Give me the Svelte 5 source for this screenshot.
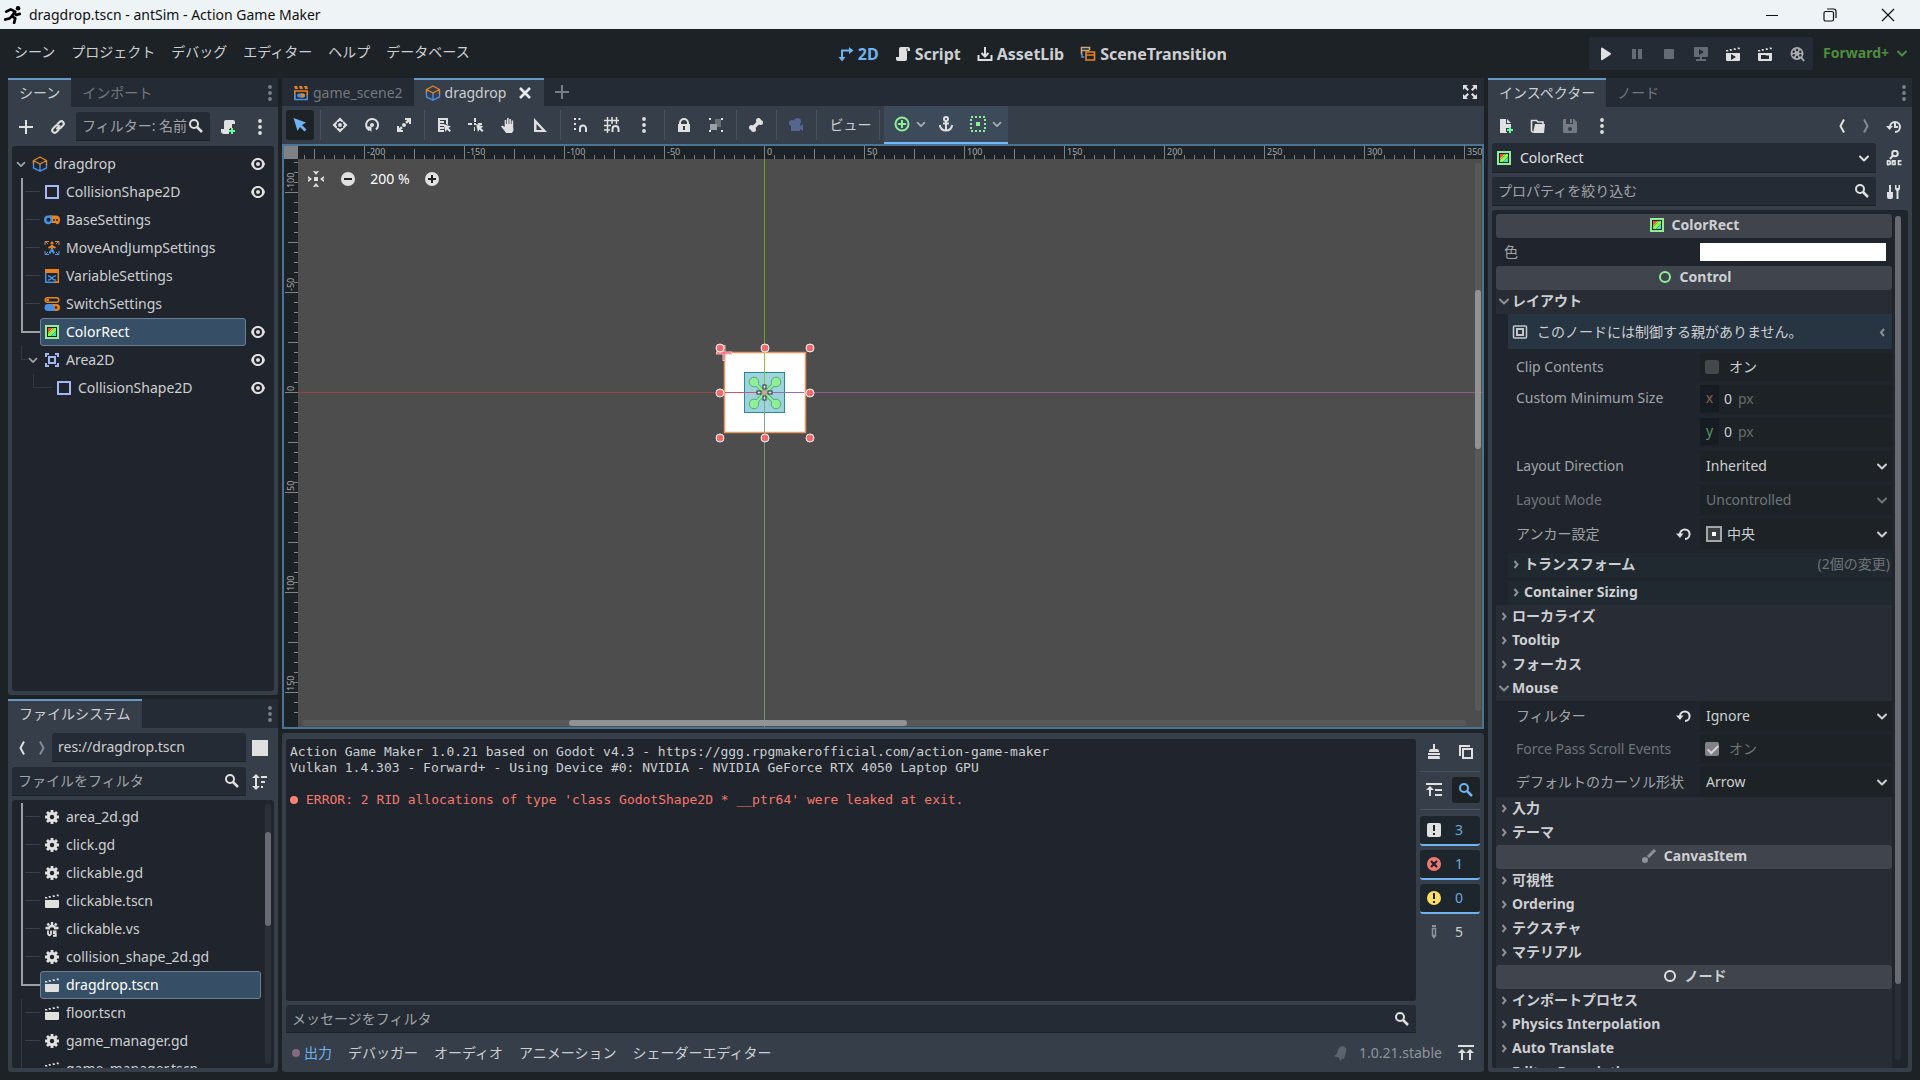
<script>
  const w = "#e0e0e0";

  const icons = {
    runner:
      '<g fill="none" stroke="#000" stroke-width="2.4" stroke-linecap="round" stroke-linejoin="round"><path d="M2 5l4-2 4 2-3 4 3 2-1 4M1 12l4-1 2-2M9 6l2 2 3-1"/></g><circle cx="12.500" cy="2" r="2"/>',
    add: `<path fill="currentColor" d="M7 1v6H1v2h6v6h2V9h6V7H9V1z"/>`,
    link: `<g fill="none" stroke="${w}" stroke-width="2" stroke-linecap="round"><path d="M7 9.500L9.500 7"/><path d="M7.500 5l2.300-2.300a2.500 2.500 0 0 1 3.500 3.500L10.500 9a2.500 2.500 0 0 1-2.500.600"/><path d="M8.500 11l-2.300 2.300a2.500 2.500 0 0 1-3.500-3.500L5.500 7A2.500 2.500 0 0 1 8 6.400"/></g>`,
    search:
      '<g fill="none" stroke="currentColor" stroke-width="2"><circle cx="6" cy="6" r="4"/><path d="M9 9l5 5" stroke-width="2.500"/></g>',
    scriptAdd: `<path fill="${w}" d="M6 1a2 2 0 0 0-2 2v7H1v2a3 3 0 0 0 3 3h5v-5h1V9h2V5h3V3a2 2 0 0 0-2-2z"/><path fill="#5fff97" d="M11 9h2v2h2v2h-2v2h-2v-2H9v-2h2z"/>`,
    dots: '<g fill="currentColor"><circle cx="8" cy="2" r="1.900"/><circle cx="8" cy="8" r="1.900"/><circle cx="8" cy="14" r="1.900"/></g>',
    eye: `<path fill="${w}" fill-rule="evenodd" d="M8 2C4.500 2 2 4.500 1 8c1 3.500 3.500 6 7 6s6-2.500 7-6c-1-3.500-3.500-6-7-6zm0 2a4 4 0 0 1 0 8 4 4 0 0 1 0-8zm0 2a2 2 0 0 0 0 4 2 2 0 0 0 0-4z"/>`,
    chevDown:
      '<path fill="none" stroke="currentColor" stroke-width="2" stroke-linecap="round" stroke-linejoin="round" d="M4 6.500l4 4 4-4"/>',
    chevRight:
      '<path fill="none" stroke="currentColor" stroke-width="2" d="M6.500 5l3 3.500-3 3.500"/>',
    chevLeft:
      '<path fill="none" stroke="currentColor" stroke-width="2" d="M10 5L7 8.500 10 12"/>',
    back: '<path fill="none" stroke="currentColor" stroke-width="2" d="M10 1.500L6.500 8l3.500 6.500"/>',
    forward:
      '<path fill="none" stroke="currentColor" stroke-width="2" d="M6 1.500L9.500 8 6 14.500"/>',
    cube: '<g fill="none" stroke-width="1.400" stroke-linejoin="round"><path stroke="#4a8ee0" d="M1.500 4.500v7.500L8 15.200 14.500 12V8M8 8v7"/><path stroke="#e0862c" d="M1.500 4.500L8 1l6.500 3.500L8 8zM14.500 4.500V9M1.500 4.500v3"/></g>',
    shape:
      '<rect x="2" y="2" width="12" height="12" fill="none" stroke="#a5b7f3" stroke-width="2"/>',
    base: '<path fill="#e8821e" d="M5 3.500h7A4 4 0 0 1 16 8c0 4-3 5.500-4.500 3H8z"/><path fill="#4a90e2" d="M4 3.500h4V11H7c-1.500 2.500-7 1.500-7-3a4 4 0 0 1 4-4.500z"/><circle cx="4.500" cy="7.700" r="2" fill="#1d2229"/><circle cx="10" cy="8" r="1" fill="#1d2229"/><circle cx="13" cy="8" r="1" fill="#1d2229"/>',
    move: '<path fill="none" stroke="#c98a55" d="M1 5V1.500h4M11 1.500h4V5M1.500 1.500L4 4M14.500 1.500L12 4"/><path fill="none" stroke="#5a93cf" d="M1 11v3.500h4M11 14.500h4V11M1.500 14.500L4 12M14.500 14.500L12 12"/><circle cx="8" cy="3" r="1.600" fill="#e8821e"/><path fill="none" stroke="#e8821e" stroke-width="2" d="M8 5v4M4.500 8L8 6l3.500 2"/><path fill="none" stroke="#4a90e2" stroke-width="2" d="M8 9l-2.500 4.500M8 9l2 4.500"/>',
    variable:
      '<path fill="#e8821e" d="M1 1h14v4H1z"/><path fill="none" stroke="#4a90e2" stroke-width="1.500" d="M1.700 5v9.300h12.600"/><path fill="none" stroke="#e8821e" stroke-width="1.500" d="M14.300 4v10.300H10"/><path fill="none" stroke="#4a90e2" stroke-width="1.500" d="M4 8c3-1 4 5 8 4M4 12c3 1 4-5 8-4"/>',
    toggles:
      '<rect x="1.200" y="1.700" width="13.600" height="4.600" rx="2.300" fill="none" stroke="#e8821e" stroke-width="1.400"/><circle cx="3.700" cy="4" r="1.500" fill="#e8821e"/><path fill="#e8821e" d="M8 8h4.500a3.500 3.500 0 0 1 0 7H8z"/><path fill="#4a90e2" d="M4 8h5l2 7H4a3.500 3.500 0 0 1 0-7z"/><circle cx="12" cy="11.500" r="1.300" fill="#1d2229"/>',
    colorRect:
      '<rect x="2" y="2" width="12" height="12" fill="#1d2229" stroke="#8eef97" stroke-width="2"/><path fill="#ff4545" d="M4 4h4L4 8z"/><path fill="#ffa53a" d="M8 4h2l-6 6V8z"/><path fill="#80ff45" d="M10 4h2v3l-5 5H4v-2z"/><path fill="#45e0c0" d="M12 7v5H7z"/>',
    area: '<path fill="none" stroke="#a5b7f3" stroke-width="2" d="M2 5V2h3M11 2h3v3M14 11v3h-3M5 14H2v-3"/><rect x="5" y="5" width="6" height="6" fill="none" stroke="#a5b7f3" stroke-width="2"/>',
    gear: `<g fill="none" stroke="${w}"><circle cx="8" cy="8" r="3.700" stroke-width="3"/><path stroke-width="2.800" d="M8 1v3M8 12v3M1 8h3M12 8h3M3 3l2.200 2.200M10.800 10.800L13 13M13 3l-2.200 2.200M5.200 10.800L3 13"/></g>`,
    vs: `<path fill="none" stroke="${w}" stroke-width="2.400" d="M8 1v3M1.500 7H5M11 7h3.500M3.500 2.500l1.500 2M12.500 2.500l-1.500 2M4.500 8.500a3.500 3.500 0 0 1 7 0"/><path fill="none" stroke="${w}" stroke-width="1.800" d="M4 9.500v3.500q1.500 2.500 3 0V9.500M12.500 10.300h-2.700v2h2v2.500H9"/>`,
    clapper: `<path fill="${w}" d="M1 7h14v7a1 1 0 0 1-1 1H2a1 1 0 0 1-1-1zM1 4h2l.500 1.500H1zM4.500 3h2l.500 1.700h-2zM8.500 2.200h2l.500 1.700H9zM12.500 1.500h2L15 3.200h-2z"/>`,
    sceneGame:
      '<path fill="none" stroke="#e8821e" stroke-width="1.600" d="M1.800 14.500V6h12.400v4"/><path fill="#e8821e" d="M1 1h3l1 3H2zM6 1h3l1 3H7zM11 1h3l1 3h-3z"/><path fill="none" stroke="#4a90e2" stroke-width="1.600" d="M1.800 9v5.500h12.400V10"/><rect x="4" y="8.500" width="8" height="4" rx="2" fill="#4a90e2"/><path fill="#e8821e" d="M8 8.500h2a2 2 0 0 1 0 4H8z"/>',
    close:
      '<path stroke="currentColor" stroke-width="2.600" d="M3 3l10 10M13 3L3 13"/>',
    expand: `<path fill="${w}" d="M1 1h5L4.300 2.700 7 5.400 5.400 7 2.700 4.300 1 6zM15 1h-5l1.700 1.700L9 5.400 10.600 7l2.700-2.700L15 6zM1 15h5l-1.700-1.700L7 10.600 5.400 9l-2.700 2.700L1 10zM15 15h-5l1.700-1.700L9 10.600 10.600 9l2.700 2.700L15 10z"/>`,
    select: '<path fill="currentColor" d="M1.500 1l4 13 2.500-4 4.500 4.500 2-2L10 8l4-2.500z"/>',
    moveTool: `<g fill="${w}"><circle cx="8" cy="8" r="2"/><path d="M8 0.500L11.500 4v1H9.500L8 3.800 6.500 5h-2V4zM8 15.500l3.500-3.500v-1H9.500L8 12.200 6.500 11h-2v1zM.500 8L4 4.500h1v2L3.800 8 5 9.500v2H4zM15.500 8L12 4.500h-1v2L12.200 8 11 9.500v2h1z"/></g>`,
    rotate: `<circle cx="8" cy="8" r="2" fill="${w}"/><path fill="none" stroke="${w}" stroke-width="2" d="M5.500 13.300A6 6 0 1 1 12 12.500"/><path fill="${w}" d="M2 9.500h5.500V15z"/>`,
    scale: `<g fill="${w}"><circle cx="8" cy="8" r="2"/><path d="M9 1h6v6h-2V4.800l-2 2L9.200 5l2-2H9zM7 15H1V9h2v2.200l2-2L6.800 11l-2 2H7z"/></g>`,
    list: `<path fill="${w}" d="M2 1h10v7l-2-1V3H4v1h4v2H4v1h4v2H4v1h4v2H4v1h4v2H2z"/><path fill="${w}" d="M7.500 7l2 8 1.500-2.500L13.500 15l1.500-1.500L12.500 11l2.500-1.500z"/>`,
    pivot: `<path fill="${w}" d="M6 1h2v4H6zM0 6h4v2H0zM10 6h4v2h-4zM6 10h1v4H6zM6 6h2v2H6zM8 7l2 8 1.500-2.500L14 15l1.500-1.500L13 11l2.500-1.500z"/>`,
    hand: `<path fill="${w}" d="M7 1h1.600v6h.700V2h1.600v5h.700V3.500h1.600V11a4.500 4.500 0 0 1-8.500 3L1 9.500l1.200-1L4.700 10V3h1.600v4H7z"/>`,
    ruler: `<path fill="${w}" fill-rule="evenodd" d="M2 1v14h13zm2.500 6l5.500 6H4.500z"/>`,
    snap: `<path fill="${w}" d="M2 1h2v2H2zM2 6h2v2H2zM6.500 1h2v2h-2zM2 11h2v2H2z"/><path fill="none" stroke="${w}" stroke-width="2" d="M8 15v-3.500a3 3 0 0 1 6 0V15"/>`,
    grid: `<path stroke="${w}" stroke-width="1.500" fill="none" d="M0 3.500h15M0 8.500h7M0 13h6M3.500 0v16M8 0v7M12.500 0v7"/><path fill="none" stroke="${w}" stroke-width="2" d="M8.500 15v-3a3 3 0 0 1 6 0v3"/>`,
    lock: `<path fill="${w}" fill-rule="evenodd" d="M8 1a5 5 0 0 0-5 5v1H2v8h12V7h-1V6a5 5 0 0 0-5-5zm0 2a3 3 0 0 1 3 3v1H5V6a3 3 0 0 1 3-3zM7 9h2v4H7z"/>`,
    group: `<path fill="${w}" d="M1 1h2v2H1zM13 1h2v2h-2zM1 13h2v2H1zM13 13h2v2h-2z"/><path fill="#6a7078" d="M7 2h6v8H7z"/><path fill="#9ba0a6" d="M2 7h7v6H2z"/>`,
    bone: `<path stroke="${w}" stroke-width="3.500" d="M5 11l6-6"/><g fill="${w}"><circle cx="10.500" cy="3.500" r="2.500"/><circle cx="12.500" cy="5.500" r="2.500"/><circle cx="3.500" cy="10.500" r="2.500"/><circle cx="5.500" cy="12.500" r="2.500"/></g>`,
    camera:
      '<g fill="#56658f"><circle cx="9.500" cy="4.500" r="3.500"/><circle cx="4" cy="6" r="3"/><path d="M3 7h9v2l3-2v7l-3-2v2H3z"/></g>',
    greenPlus:
      '<circle cx="8" cy="8" r="6.500" fill="none" stroke="#8eef97" stroke-width="2"/><path stroke="#8eef97" stroke-width="2" d="M8 4v8M4 8h8"/>',
    anchor: `<g fill="none" stroke="${w}" stroke-width="2"><circle cx="8" cy="3" r="2"/><path d="M8 5v9M5 7.500h6M1.800 9c.700 4 3 5.500 6.200 5.500S13.500 13 14.200 9"/></g>`,
    dotted:
      '<rect x="1" y="1" width="14" height="14" fill="none" stroke="#8eef97" stroke-width="2" stroke-dasharray="2 2"/><path fill="#8eef97" d="M6 6h4v4H6z"/>',
    center: `<g fill="${w}"><rect x="6" y="6" width="4" height="4"/><path d="M5 0l3 4 3-4H9L8 1 7 0zM5 16l3-4 3 4H9l-1-1-1 1zM0 5l4 3-4 3V9l1-1-1-1zM16 5l-4 3 4 3V9l-1-1 1-1z"/></g>`,
    zoomOut: `<circle cx="8" cy="8" r="7" fill="${w}"/><path stroke="#222" stroke-width="2" d="M4 8h8"/>`,
    zoomIn: `<circle cx="8" cy="8" r="7" fill="${w}"/><path stroke="#222" stroke-width="2" d="M4 8h8M8 4v8"/>`,
    twoD: '<path fill="none" stroke="currentColor" stroke-width="2" d="M4 13V4.500h9"/><path fill="currentColor" d="M11 1l4.500 3.500L11 8zM.500 11h7L4 15.500z"/>',
    script: `<path fill="${w}" d="M6 1a2 2 0 0 0-2 2v8H1v2a2 2 0 0 0 2 2h7a2 2 0 0 0 2-2V5h3V3a2 2 0 0 0-2-2z"/><path stroke="#1d2229" fill="none" d="M12 5V2.500"/>`,
    asset: `<path fill="none" stroke="${w}" stroke-width="2" d="M8 1v9M4.500 7L8 10.500 11.500 7M1.500 9v5h13V9"/>`,
    transition:
      '<g fill="none" stroke-width="1.600"><path stroke="#c8aa88" d="M1.500 8.500V1.500h8V4M1.500 4.500h8"/><path stroke="#e8821e" d="M6 8V6h8.500v8H6zM6 9h8"/><path stroke="#4a90e2" d="M2 8v3h2.500"/></g>',
    play: '<path fill="currentColor" d="M4 2.500a1 1 0 0 1 1.500-.700l8 5.300a1 1 0 0 1 0 1.700l-8 5.300A1 1 0 0 1 4 13.300z"/>',
    pause: '<path fill="currentColor" d="M3 3h4v10H3zM9 3h4v10H9z"/>',
    stop: '<rect x="3" y="3" width="10" height="10" rx="1" fill="currentColor"/>',
    remote:
      '<path fill="currentColor" fill-rule="evenodd" d="M2 1h12a1 1 0 0 1 1 1v8a1 1 0 0 1-1 1H9v2h4v2H3v-2h4v-2H2a1 1 0 0 1-1-1V2a1 1 0 0 1 1-1zm4 2v6l5-3z"/>',
    playScene: `<path fill="${w}" fill-rule="evenodd" d="M1 7h14v7a1 1 0 0 1-1 1H2a1 1 0 0 1-1-1zm5 1v6l5-3zM1 4h2l.500 1.500H1zM4.500 3h2l.500 1.700h-2zM8.500 2.200h2l.500 1.700H9zM12.500 1.500h2L15 3.200h-2z"/>`,
    playCustom: `<path fill="${w}" fill-rule="evenodd" d="M1 7h14v7a1 1 0 0 1-1 1H2a1 1 0 0 1-1-1zm3 2v4h8V9.500H9L8.500 9zM1 4h2l.500 1.500H1zM4.500 3h2l.500 1.700h-2zM8.500 2.200h2l.500 1.700H9zM12.500 1.500h2L15 3.200h-2z"/>`,
    movie:
      '<circle cx="8" cy="7.500" r="6.500" fill="#a8abae"/><path stroke="#a8abae" stroke-width="2" d="M12 11l3 4"/><g fill="#252b34"><circle cx="8" cy="4" r="1.200"/><circle cx="8" cy="11" r="1.200"/><circle cx="4.700" cy="5.700" r="1.200"/><circle cx="11.300" cy="5.700" r="1.200"/><circle cx="4.700" cy="9.300" r="1.200"/><circle cx="11.300" cy="9.300" r="1.200"/></g>',
    fileAdd: `<path fill="${w}" d="M2 1h6v5h5v3h-2v1H8v4h1v1H2z"/><path fill="${w}" d="M9 1l4 4H9z"/><path fill="#5fff97" d="M11 9h2v2h2v2h-2v2h-2v-2H9v-2h2z"/>`,
    folder: `<path fill="none" stroke="${w}" stroke-width="1.600" d="M3 14.500L1.500 13V2.500h5L8 4h5v2"/><path fill="${w}" d="M5 6h10l-1 9H3z"/>`,
    save: '<path fill="#757a83" fill-rule="evenodd" d="M1 2a1 1 0 0 1 1-1h2v5h7V1h1l3 3v10a1 1 0 0 1-1 1H2a1 1 0 0 1-1-1zm7 7a2 2 0 0 0 0 4 2 2 0 0 0 0-4zM8 1h2v4H8z"/>',
    history: `<path fill="none" stroke="${w}" stroke-width="2" d="M4 9a5 5 0 1 1 5 5M9 5v4h3"/><path fill="${w}" d="M0 8h7l-3.500 4z"/>`,
    doc: `<g fill="none" stroke="${w}" stroke-width="2"><circle cx="9" cy="3.500" r="2.800"/><path d="M7 5.500L4 9"/></g><path fill="none" stroke="${w}" stroke-width="1.700" d="M1.500 10.500v4.500M1 10.800h1.500a1.800 1.800 0 0 1 0 3.900H1M6.500 10.800h2.500v3.700H6.500zM15.500 10.800H12.500v3.700h3"/>`,
    tools: `<path fill="${w}" d="M3 1h2v7h2v5a2 2 0 0 1-2 2H3a2 2 0 0 1-2-2V8h2zM9 1h1.500v3h2V1H14v4l-1.500 2v8h-2V7L9 5z"/>`,
    square: `<path fill="${w}" d="M0 0h16v16H0z"/>`,
    sort: `<path fill="${w}" d="M4 0l4 4H5v8h3l-4 4-4-4h3V4H0zM9 2h6v2H9zM9 7h4v2H9zM9 12h2v2H9z"/>`,
    control:
      '<circle cx="8" cy="8" r="5" fill="none" stroke="#8eef97" stroke-width="2"/>',
    node: `<circle cx="8" cy="8" r="5" fill="none" stroke="${w}" stroke-width="2"/>`,
    brush:
      '<path stroke="#8f9296" stroke-width="3" d="M7 9l7-7"/><circle cx="4" cy="12" r="3" fill="#8f9296"/>',
    container:
      '<g fill="none" stroke="#c4c7ca" stroke-width="1.600"><rect x="1.500" y="2" width="13" height="12" rx="1"/><rect x="5" y="5" width="6" height="6" stroke-width="2"/></g>',
    revert: `<path fill="none" stroke="${w}" stroke-width="2" d="M4 8a4.800 4.800 0 1 1 5 5"/><path fill="${w}" d="M0 7.500h7.500L4 12z"/>`,
    centerWide:
      '<rect x="1" y="1" width="14" height="14" fill="#3a3f42" stroke="#a3a6a6" stroke-width="2"/><path fill="#fff" d="M6 6h4v4H6z"/>',
    broom: `<path fill="${w}" d="M7 0h2v5h2a2 2 0 0 1 2 2v1H3V7a2 2 0 0 1 2-2h2zM2 9h12v2H2zM2 12h11.500l.500 3H2z"/>`,
    copy: `<path fill="none" stroke="${w}" stroke-width="2" d="M2 12V2h10M5 5h9v9H5z"/>`,
    collapse: `<path fill="${w}" d="M0 1h16v2H0zM4 4l4 4H5v6H3V8H0zM9 7h7v2H9zM9 12h7v2H9z"/>`,
    message: `<rect x="1" y="1" width="14" height="14" rx="2" fill="${w}"/><path fill="#1d2229" d="M7 3h2v6H7zM7 11h2v2H7z"/>`,
    error:
      '<circle cx="8" cy="8" r="7" fill="#f07a72"/><path stroke="#1d2229" stroke-width="2.200" d="M5 5l6 6M11 5l-6 6"/>',
    warning:
      '<circle cx="8" cy="8" r="7" fill="#ffdd65"/><path fill="#1d2229" d="M7 3h2v6H7zM7 11h2v2H7z"/>',
    edit: '<path fill="#8f9399" d="M6 1h4v2H6z"/><path fill="none" stroke="#8f9399" stroke-width="1.500" d="M6.500 4.500h3v7h-3z"/><path fill="#8f9399" d="M6 12h4l-2 3z"/>',
    bell: '<path fill="#5c636d" d="M10 1c3 1 4 3 3 6l-2 7-2-.500-1 2-2-1 .500-1.500L1 11c3-2 3-3 4-6 1-3 3-4 5-4z"/>',
    raise: `<path fill="${w}" d="M0 0h16v2H0zM4 4l4 4H5v7H3V8H0zM12 4l4 4h-3v7h-2V8H8z"/>`,
    minimize: '<path stroke="#111" d="M2 8.500h12"/>',
    restore:
      '<g fill="none" stroke="#111" stroke-width="1.200"><rect x="2" y="4.500" width="9.500" height="9.500" rx="1.500"/><path d="M5 2h6.500a2.500 2.500 0 0 1 2.500 2.500V11"/></g>',
    closeWin: '<path stroke="#111" stroke-width="1.200" d="M2 2l12 12M14 2L2 14"/>',
  };

  const menus = ["シーン", "プロジェクト", "デバッグ", "エディター", "ヘルプ", "データベース"];

  const screens = [
    { icon: "twoD", label: "2D", active: true },
    { icon: "script", label: "Script" },
    { icon: "asset", label: "AssetLib" },
    { icon: "transition", label: "SceneTransition" },
  ];

  const runButtons = [
    { icon: "play", label: "Play" },
    { icon: "pause", label: "Pause", off: true },
    { icon: "stop", label: "Stop", off: true },
    { icon: "remote", label: "Remote", off: true },
    { icon: "playScene", label: "Play scene" },
    { icon: "playCustom", label: "Play custom scene" },
    { icon: "movie", label: "Movie maker" },
  ];

  const sceneTree = [
    { name: "dragdrop", icon: "cube", depth: 0, open: true, eye: true },
    { name: "CollisionShape2D", icon: "shape", depth: 1, guide: "lit", eye: true },
    { name: "BaseSettings", icon: "base", depth: 1, guide: "lit" },
    { name: "MoveAndJumpSettings", icon: "move", depth: 1, guide: "lit" },
    { name: "VariableSettings", icon: "variable", depth: 1, guide: "lit" },
    { name: "SwitchSettings", icon: "toggles", depth: 1, guide: "lit" },
    { name: "ColorRect", icon: "colorRect", depth: 1, guide: "lit-end", eye: true, selected: true },
    { name: "Area2D", icon: "area", depth: 1, guide: "dim-end", open: true, eye: true },
    { name: "CollisionShape2D", icon: "shape", depth: 2, guide: "dim-end leaf", eye: true },
  ];

  const files = [
    { name: "area_2d.gd", icon: "gear", guide: "lit" },
    { name: "click.gd", icon: "gear", guide: "lit" },
    { name: "clickable.gd", icon: "gear", guide: "lit" },
    { name: "clickable.tscn", icon: "clapper", guide: "lit" },
    { name: "clickable.vs", icon: "vs", guide: "lit" },
    { name: "collision_shape_2d.gd", icon: "gear", guide: "lit" },
    { name: "dragdrop.tscn", icon: "clapper", guide: "lit-end", selected: true },
    { name: "floor.tscn", icon: "clapper", guide: "dim" },
    { name: "game_manager.gd", icon: "gear", guide: "dim" },
    { name: "game_manager.tscn", icon: "clapper", guide: "dim" },
  ].map((f) => ({ ...f, depth: 1 }));

  const toolGroups = [
    ["select"],
    ["moveTool", "rotate", "scale"],
    ["list", "pivot", "hand", "ruler"],
    ["snap", "grid", "dots"],
    ["lock", "group"],
    ["bone"],
    ["camera"],
  ];

  const originX = 480;
  const originY = 246;
  let viewWidth = $state(0);
  let viewHeight = $state(0);

  // ruler marks are 10px apart, every tenth one carries a label
  function marks(origin, start, length) {
    const first = Math.ceil((start - origin) / 10);
    const last = Math.floor((length - origin) / 10);
    return Array.from({ length: Math.max(0, last - first) }, (_, i) => first + i);
  }
  const tickLength = (i) => (i % 10 === 0 ? 13 : i % 5 === 0 ? 10 : 4);

  const handles = [
    [-44, -44], [1, -44], [46, -44],
    [-44, 1], [46, 1],
    [-44, 46], [1, 46], [46, 46],
  ];
  const petals = [[-10, -10], [12, -10], [-10, 12], [12, 12]];

  const counters = [
    { icon: "message", count: 3, on: true },
    { icon: "error", count: 1, on: true },
    { icon: "warning", count: 0, on: true },
    { icon: "edit", count: 5 },
  ];

  const panels = ["デバッガー", "オーディオ", "アニメーション", "シェーダーエディター"];
</script>

{#snippet icon(name, size = 16)}
  <svg class="icon" width={size} height={size} viewBox="0 0 16 16" aria-hidden="true">{@html icons[name]}</svg>
{/snippet}

{#snippet treeRow(item)}
  <li class="row">
    <span class="lead depth{item.depth} {item.guide ?? ''}">
      {#if item.open}{@render icon("chevDown", 14)}{/if}
    </span>
    <button class="item" class:selected={item.selected}>
      {@render icon(item.icon)}<span>{item.name}</span>
    </button>
    {#if item.eye}
      <button class="eye" aria-label="Toggle visibility">{@render icon("eye")}</button>
    {/if}
  </li>
{/snippet}

{#snippet category(name, label)}
  <h2 class="category">{@render icon(name)}{label}</h2>
{/snippet}

{#snippet section(label, open = false)}
  <button class="section">{@render icon(open ? "chevDown" : "chevRight")}{label}</button>
{/snippet}

{#snippet choice(id, label, value, off = false, changed = false, image = "")}
  <div class="prop" class:off>
    <label for={id}>{label}</label>
    {#if changed}<button class="revert" aria-label="Revert {label}">{@render icon("revert")}</button>{/if}
    <div class="value">
      {#if image}{@render icon(image)}{/if}
      <select {id} disabled={off}><option>{value}</option></select>
      {@render icon("chevDown")}
    </div>
  </div>
{/snippet}

{#snippet toggle(id, label, checked, off)}
  <div class="prop short" class:off>
    <label for={id}>{label}</label>
    <label class="value check">
      <input {id} type="checkbox" {checked} disabled={off} />オン
    </label>
  </div>
{/snippet}

<div class="app">
  <header class="titlebar">
    {@render icon("runner", 18)}
    <span class="title">dragdrop.tscn - antSim - Action Game Maker</span>
    <button aria-label="Minimize">{@render icon("minimize")}</button>
    <button aria-label="Restore">{@render icon("restore")}</button>
    <button aria-label="Close window">{@render icon("closeWin")}</button>
  </header>

  <div class="menubar">
    <nav class="menus">
      {#each menus as menu}<button>{menu}</button>{/each}
    </nav>
    <div class="screens">
      {#each screens as screen}
        <button class:active={screen.active}>{@render icon(screen.icon)}{screen.label}</button>
      {/each}
    </div>
    <div class="run-area">
      <div class="run">
        {#each runButtons as b}
          <button aria-label={b.label} disabled={b.off}>{@render icon(b.icon)}</button>
        {/each}
      </div>
      <button class="renderer">Forward+ {@render icon("chevDown")}</button>
    </div>
  </div>

  <main>
    <aside class="left">
      <section class="dock scene-dock">
        <div class="tabs">
          <button class="tab active">シーン</button>
          <button class="tab">インポート</button>
          <button class="more" aria-label="Dock menu">{@render icon("dots")}</button>
        </div>
        <div class="bar scene-bar">
          <button aria-label="Add node">{@render icon("add")}</button>
          <button aria-label="Instance scene">{@render icon("link")}</button>
          <div class="field">
            <input aria-label="Filter nodes" placeholder="フィルター: 名前" />
            {@render icon("search")}
          </div>
          <button aria-label="Attach script">{@render icon("scriptAdd")}</button>
          <button aria-label="More">{@render icon("dots")}</button>
        </div>
        <ul class="tree">
          {#each sceneTree as item}{@render treeRow(item)}{/each}
        </ul>
      </section>

      <section class="dock files-dock">
        <div class="tabs">
          <button class="tab active">ファイルシステム</button>
          <button class="more" aria-label="Dock menu">{@render icon("dots")}</button>
        </div>
        <div class="bar path-bar">
          <button class="nav" aria-label="Back">{@render icon("back")}</button>
          <button class="nav faded" aria-label="Forward">{@render icon("forward")}</button>
          <div class="field"><input aria-label="Path" value="res://dragdrop.tscn" /></div>
          <button class="end" aria-label="Split mode">{@render icon("square")}</button>
        </div>
        <div class="bar filter-bar">
          <div class="field">
            <input aria-label="Filter files" placeholder="ファイルをフィルタ" />
            {@render icon("search")}
          </div>
          <button class="end" aria-label="Sort">{@render icon("sort")}</button>
        </div>
        <div class="file-list">
          <ul class="tree">
            {#each files as item}{@render treeRow(item)}{/each}
          </ul>
          <div class="track"><div class="thumb"></div></div>
        </div>
      </section>
    </aside>

    <div class="center">
      <section class="editor">
        <div class="tabs">
          <button class="tab scene">{@render icon("sceneGame")}game_scene2</button>
          <div class="tab scene active">
            {@render icon("cube")}dragdrop
            <button aria-label="Close tab">{@render icon("close")}</button>
          </div>
          <button class="new-tab" aria-label="New tab">{@render icon("add")}</button>
          <button class="expand" aria-label="Distraction free mode">{@render icon("expand")}</button>
        </div>

        <div class="toolbar">
          {#each toolGroups as group}
            {#each group as tool}
              <button class="tool" class:pressed={tool === "select"} aria-label={tool}>{@render icon(tool)}</button>
            {/each}
            <span class="sep"></span>
          {/each}
          <button class="view">ビュー</button>
          <div class="context">
            <button aria-label="Add">{@render icon("greenPlus")}{@render icon("chevDown", 14)}</button>
            <button class="anchors" aria-label="Anchors">{@render icon("anchor")}</button>
            <button aria-label="Presets">{@render icon("dotted")}{@render icon("chevDown", 14)}</button>
          </div>
        </div>

        <div class="viewport" bind:clientWidth={viewWidth} bind:clientHeight={viewHeight}>
          <svg class="canvas" width="100%" height="100%">
            <rect width="100%" height="100%" fill="#4d4d4d" />
            <rect x="0" y="246" width="480" height="1" fill="#9c4343" />
            <rect x="481" y="246" width="100%" height="1" fill="#8f5a94" />
            <rect x="480" y="0" width="1" height="246" fill="#6fa02c" />
            <rect x="480" y="247" width="1" height="100%" fill="#6f9a70" />
            <g transform="translate({originX} {originY})">
              <rect x="-39.500" y="-39.500" width="81" height="80" fill="#fff" stroke="#e8955f" stroke-width="1.500" />
              <rect x="-19.500" y="-19.500" width="40" height="40" fill="#9ed2dc" stroke="#258a9b" />
              <path d="M-39 0.500H0" stroke="#d9536b" />
              <path d="M1 0.500H40" stroke="#9b6cb0" />
              <path d="M0.500 -39V0" stroke="#86c440" />
              <path d="M0.500 1V40" stroke="#7fa88a" />
              {#each petals as [x, y]}
                <path d="M1 1L{x} {y}" stroke="#58ab80" stroke-width="4" />
                <circle cx={x} cy={y} r="4.800" fill="#8eef97" stroke="#58ab80" />
                <path d="M1 1L{x} {y}" stroke="#8eef97" stroke-width="2.400" />
              {/each}
              <g fill="#dfe6e2" stroke="#20343a">
                <rect x="-1" y="-7" width="3" height="4" />
                <rect x="-1" y="4" width="3" height="4" />
                <rect x="-7" y="-1" width="4" height="3" />
                <rect x="4" y="-1" width="4" height="3" />
              </g>
              <circle cx="0.500" cy="0.500" r="2.500" fill="#b5b5a5" stroke="#d98a7a" />
              <path d="M-40 -47v16M-48 -39h16" stroke="#f7b9be" stroke-width="3" />
              <path d="M-40 -46v14M-47 -39h14" stroke="#e8606c" />
              {#each handles as [x, y]}
                <circle cx={x} cy={y} r="4" fill="#f06a6c" stroke="#fff" />
              {/each}
            </g>
            <rect width="100%" height="13" fill="#1d2226" />
            <g class="marks">
              {#each marks(originX, 14, viewWidth) as i}
                <path d="M{i * 10 + originX + 0.5} {13 - tickLength(i)}v{tickLength(i)}" />
                {#if i % 10 === 0}<text x={i * 10 + originX + 3} y="9">{i * 5}</text>{/if}
              {/each}
            </g>
            <rect width="14" height="100%" fill="#1d2226" />
            <g class="marks">
              {#each marks(originY, 13, viewHeight) as i}
                <path d="M{14 - tickLength(i)} {i * 10 + originY + 0.5}h{tickLength(i)}" />
                {#if i % 10 === 0}
                  <text transform="translate(10 {i * 10 + originY - 1}) rotate(-90)">{i * 5}</text>
                {/if}
              {/each}
            </g>
            <rect width="14" height="13" fill="#7f8284" />
          </svg>
          <div class="zoom">
            <button aria-label="Center view">{@render icon("center")}</button>
            <button aria-label="Zoom out">{@render icon("zoomOut")}</button>
            <span>200 %</span>
            <button aria-label="Zoom in">{@render icon("zoomIn")}</button>
          </div>
          <div class="vscroll"><div></div></div>
          <div class="hscroll"><div></div></div>
        </div>
      </section>

      <section class="output">
        <div class="output-body">
          <div class="log-side">
            <div class="log">
              <p>Action Game Maker 1.0.21 based on Godot v4.3 - https://ggg.rpgmakerofficial.com/action-game-maker</p>
              <p>Vulkan 1.4.303 - Forward+ - Using Device #0: NVIDIA - NVIDIA GeForce RTX 4050 Laptop GPU</p>
              <p></p>
              <p class="error"><i></i>ERROR: 2 RID allocations of type 'class GodotShape2D * __ptr64' were leaked at exit.</p>
            </div>
            <div class="field">
              <input aria-label="Filter messages" placeholder="メッセージをフィルタ" />
              {@render icon("search")}
            </div>
          </div>
          <div class="log-tools">
            <div class="pair">
              <button aria-label="Clear">{@render icon("broom")}</button>
              <button aria-label="Copy">{@render icon("copy")}</button>
            </div>
            <div class="pair">
              <button aria-label="Collapse">{@render icon("collapse")}</button>
              <button class="pressed" aria-label="Search">{@render icon("search")}</button>
            </div>
            {#each counters as c}
              <button class="counter" class:on={c.on}>{@render icon(c.icon)}<span>{c.count}</span></button>
            {/each}
          </div>
        </div>
        <div class="bottom-bar">
          <button class="active"><i></i>出力</button>
          {#each panels as panel}<button>{panel}</button>{/each}
          <span class="version">{@render icon("bell")}1.0.21.stable</span>
          <button aria-label="Expand panel">{@render icon("raise")}</button>
        </div>
      </section>
    </div>

    <aside class="dock inspector">
      <div class="tabs">
        <button class="tab active">インスペクター</button>
        <button class="tab">ノード</button>
        <button class="more" aria-label="Dock menu">{@render icon("dots")}</button>
      </div>
      <div class="bar resource-bar">
        <button aria-label="New resource">{@render icon("fileAdd")}</button>
        <button aria-label="Open resource">{@render icon("folder")}</button>
        <button aria-label="Save resource">{@render icon("save")}</button>
        <button aria-label="More">{@render icon("dots")}</button>
        <span class="spacer"></span>
        <button class="nav" aria-label="Previous">{@render icon("back")}</button>
        <button class="nav faded" aria-label="Next">{@render icon("forward")}</button>
        <button aria-label="History">{@render icon("history")}</button>
      </div>
      <div class="bar object-bar">
        <div class="field object">
          {@render icon("colorRect")}
          <select aria-label="Edited object"><option>ColorRect</option></select>
          {@render icon("chevDown")}
        </div>
        <button aria-label="Documentation">{@render icon("doc")}</button>
      </div>
      <div class="bar object-bar">
        <div class="field">
          <input aria-label="Filter properties" placeholder="プロパティを絞り込む" />
          {@render icon("search")}
        </div>
        <button aria-label="Property tools">{@render icon("tools")}</button>
      </div>

      <div class="inspect">
        <div class="props">
          {@render category("colorRect", "ColorRect")}
          <div class="prop color-row">
            <label for="color">色</label>
            <input id="color" type="color" value="#ffffff" />
          </div>
          {@render category("control", "Control")}
          {@render section("レイアウト", true)}
          <div class="group">
            <div class="notice">
              {@render icon("container")}<span>このノードには制御する親がありません。</span>{@render icon("chevLeft")}
            </div>
            {@render toggle("clip", "Clip Contents", false, false)}
            <div class="prop vector">
              <label for="min-x">Custom Minimum Size</label>
              <div class="axes">
                <div class="value"><label class="x" for="min-x">x</label><input id="min-x" value="0" /><span>px</span></div>
                <div class="value"><label class="y" for="min-y">y</label><input id="min-y" value="0" /><span>px</span></div>
              </div>
            </div>
            {@render choice("direction", "Layout Direction", "Inherited")}
            {@render choice("mode", "Layout Mode", "Uncontrolled", true)}
            {@render choice("anchors", "アンカー設定", "中央", false, true, "centerWide")}
            <button class="section sub">
              {@render icon("chevRight")}トランスフォーム<small>(2個の変更)</small>
            </button>
            <button class="section sub">{@render icon("chevRight")}Container Sizing</button>
          </div>
          {@render section("ローカライズ")}
          {@render section("Tooltip")}
          {@render section("フォーカス")}
          {@render section("Mouse", true)}
          <div class="group">
            {@render choice("filter", "フィルター", "Ignore", false, true)}
            {@render toggle("force", "Force Pass Scroll Events", true, true)}
            {@render choice("cursor", "デフォルトのカーソル形状", "Arrow")}
          </div>
          {@render section("入力")}
          {@render section("テーマ")}
          {@render category("brush", "CanvasItem")}
          {@render section("可視性")}
          {@render section("Ordering")}
          {@render section("テクスチャ")}
          {@render section("マテリアル")}
          {@render category("node", "ノード")}
          {@render section("インポートプロセス")}
          {@render section("Physics Interpolation")}
          {@render section("Auto Translate")}
          {@render section("Editor Description")}
        </div>
        <div class="track"><div class="thumb"></div></div>
      </div>
    </aside>
  </main>
</div>

<style>
  :global(body) {
    margin: 0;
    background: #1d2226;
  }

  .app {
    --bg: #1d2226;
    --panel: #353e49;
    --tabs: #242b34;
    --box: #20252d;
    --text: #cdcfd2;
    --muted: #a0a4a8;
    --faint: #6f747a;
    --accent: #70b3ee;
    height: 100vh;
    display: flex;
    flex-direction: column;
    overflow: hidden;
    background: var(--bg);
    color: var(--text);
    font: 14px/20px "Noto Sans", "Noto Sans CJK JP", sans-serif;
  }

  .app * {
    box-sizing: border-box;
  }

  button,
  input,
  select {
    margin: 0;
    padding: 0;
    border: 0;
    background: none;
    color: inherit;
    font: inherit;
    min-width: 0;
    outline: none;
  }

  button {
    display: flex;
    align-items: center;
    justify-content: center;
    white-space: nowrap;
  }

  select {
    appearance: none;
    flex: 1;
    opacity: 1;
  }

  input::placeholder {
    color: var(--muted);
    opacity: 1;
  }

  ul,
  p,
  h2 {
    margin: 0;
    padding: 0;
    list-style: none;
  }

  .icon {
    display: block;
    flex: none;
  }

  /* title and menu */
  .titlebar {
    flex: none;
    height: 29px;
    display: flex;
    align-items: center;
    padding: 0 3px 0 4px;
    background: #eef3f5;
    color: #111;
  }
  .title {
    flex: 1;
    margin-left: 7px;
  }
  .titlebar button {
    width: 58px;
    height: 29px;
  }

  .menubar {
    flex: none;
    height: 49px;
    display: flex;
    align-items: center;
    justify-content: space-between;
    padding: 0 8px 0 14px;
  }
  .menus,
  .screens {
    display: flex;
    gap: 16px;
  }
  .menus {
    padding-bottom: 3px;
  }
  .screens {
    padding-left: 6px;
  }
  .screens button {
    gap: 4px;
    font-size: 16px;
    font-weight: 700;
  }
  .screens .active {
    color: var(--accent);
  }
  .run-area {
    display: flex;
    align-items: center;
  }
  .run {
    display: flex;
    height: 33px;
    border-radius: 3px;
    background: var(--tabs);
  }
  .run button {
    width: 32px;
    color: #e0e0e0;
  }
  .run button:disabled {
    color: #666b73;
  }
  .renderer {
    gap: 5px;
    padding: 0 2px 2px 10px;
    font-weight: 700;
    color: #4f8c3e;
  }

  main {
    flex: 1;
    min-height: 0;
    display: grid;
    grid-template-columns: 270px minmax(0, 1fr) 424px;
    gap: 4px;
    padding: 0 8px 8px;
  }
  .left,
  .center {
    min-height: 0;
    display: flex;
    flex-direction: column;
    gap: 4px;
  }

  /* docks */
  .dock {
    min-height: 0;
    display: flex;
    flex-direction: column;
    background: var(--panel);
    border-radius: 0 0 3px 3px;
  }
  .scene-dock {
    flex: 1;
  }
  .files-dock {
    flex: none;
    height: 373px;
  }

  .tabs {
    flex: none;
    height: 29px;
    display: flex;
    background: var(--tabs);
  }
  .tab {
    padding: 0 11px 2px;
    border-top: 2px solid transparent;
    color: #74797f;
  }
  .tab.active {
    border-color: #6698c4;
    background: var(--panel);
    color: var(--text);
  }
  .more {
    margin-left: auto;
    width: 16px;
    color: #7c8288;
  }

  .bar {
    flex: none;
    display: flex;
    align-items: center;
    color: #e0e0e0;
  }
  .bar button {
    width: 32px;
    height: 28px;
  }
  .bar .nav {
    width: 20px;
  }
  .bar .faded {
    color: #858a91;
  }
  .bar .end {
    width: 28px;
    margin-right: 4px;
  }
  .field {
    flex: 1;
    min-width: 0;
    height: 29px;
    display: flex;
    align-items: center;
    padding: 0 6px;
    border-bottom: 1px solid var(--bg);
    border-radius: 3px 3px 0 0;
    background: var(--tabs);
    color: #e0e0e0;
  }
  .field input {
    flex: 1;
    color: var(--text);
  }

  .scene-bar {
    height: 39px;
    padding: 0 2px;
  }
  .scene-bar .field {
    margin: 0 2px;
  }
  .path-bar {
    height: 39px;
    padding-left: 4px;
  }
  .filter-bar {
    height: 29px;
    padding-left: 4px;
  }

  /* trees */
  .tree {
    flex: 1;
    min-height: 0;
    min-width: 0;
    overflow: hidden;
  }
  .scene-dock > .tree,
  .file-list {
    margin: 0 4px 4px;
    border-radius: 3px;
    background: var(--box);
  }
  .scene-dock > .tree {
    padding-top: 4px;
  }
  .file-list {
    flex: 1;
    min-height: 0;
    display: flex;
    margin-top: 4px;
    padding-right: 3px;
  }
  .file-list .tree {
    padding-top: 3px;
    margin-right: 4px;
  }
  .row {
    height: 28px;
    display: flex;
  }
  .lead {
    position: relative;
    flex: none;
    display: flex;
    align-items: center;
    color: #9ea1a5;
  }
  .lead > :global(svg) {
    margin-left: auto;
  }
  .depth0 {
    width: 16px;
  }
  .depth1 {
    width: 28px;
  }
  .depth2 {
    width: 40px;
  }
  .lead::before,
  .lead::after {
    content: "";
    position: absolute;
    right: 0;
  }
  .lit::before,
  .lit-end::before {
    right: 17px;
    top: 0;
    bottom: 0;
    width: 2px;
    background: #9da0a4;
  }
  .lit::after,
  .dim::after {
    top: 13px;
    width: 15px;
    height: 1px;
    background: #3a4048;
  }
  .lit-end::before {
    bottom: 13px;
  }
  .lit-end::after {
    top: 13px;
    width: 18px;
    height: 2px;
    background: #9da0a4;
  }
  .dim::before,
  .dim-end::before {
    right: 18px;
    top: 0;
    bottom: 0;
    width: 1px;
    background: #31373f;
  }
  .dim-end::before {
    bottom: 14px;
  }
  .dim-end::after {
    right: 12px;
    top: 13px;
    width: 7px;
    height: 1px;
    background: #31373f;
  }
  .leaf::after {
    right: 0;
    width: 19px;
  }
  .item {
    flex: 1;
    justify-content: flex-start;
    gap: 6px;
    padding-left: 3px;
    border: 1px solid transparent;
    border-radius: 3px;
  }
  .item.selected {
    border-color: #6d8192;
    background: #374f66;
    color: #fff;
  }
  .eye {
    width: 24px;
    margin-right: 4px;
  }

  .track {
    flex: none;
    width: 6px;
    margin: 4px 0;
    border-radius: 3px;
    background: #2a2f37;
  }
  .thumb {
    height: 36%;
    border-radius: 3px;
    background: #686c72;
  }
  .file-list .thumb {
    margin-top: 28px;
  }

  /* editor */
  .editor {
    flex: 1;
    min-height: 0;
    display: flex;
    flex-direction: column;
  }
  .editor .tabs {
    height: 28px;
  }
  .tab.scene {
    display: flex;
    align-items: center;
    gap: 4px;
    padding: 0 11px 1px;
  }
  .tab.scene button {
    width: 16px;
    height: 16px;
    margin-left: 7px;
    color: #e8eaec;
  }
  .new-tab {
    width: 36px;
    color: #777c82;
  }
  .expand {
    margin-left: auto;
    width: 28px;
  }
  .toolbar {
    flex: none;
    height: 38px;
    display: flex;
    align-items: center;
    gap: 4px;
    padding-left: 4px;
    background: var(--panel);
  }
  .tool {
    width: 28px;
    height: 30px;
    border-radius: 3px;
    color: #e0e0e0;
  }
  .tool.pressed {
    background: var(--bg);
    color: var(--accent);
  }
  .sep {
    width: 4px;
    height: 30px;
    background: linear-gradient(#48525d, #48525d) center / 1px 100% no-repeat;
  }
  .view {
    width: 58px;
    height: 30px;
    border-right: 1px solid #48525d;
  }
  .context {
    height: 38px;
    display: flex;
    align-items: center;
    gap: 10px;
    padding: 0 4px 0 10px;
    border-bottom: 2px solid #70bafa;
    background: #3c4a59;
    color: #a9adb2;
  }
  .context button {
    height: 30px;
    gap: 4px;
  }
  .context .anchors {
    padding-right: 6px;
  }

  .viewport {
    position: relative;
    flex: 1;
    min-height: 0;
    border: 2px solid #4a7394;
  }
  .canvas {
    position: absolute;
    inset: 0;
  }
  .marks path {
    stroke: #7d8185;
  }
  .marks text {
    fill: #a6a9ac;
    font-size: 9px;
  }
  .zoom {
    position: absolute;
    left: 18px;
    top: 21px;
    display: flex;
    align-items: center;
    gap: 4px;
    color: #fff;
  }
  .zoom button {
    width: 28px;
    height: 24px;
  }
  .zoom span {
    width: 48px;
    text-align: center;
  }
  .vscroll,
  .hscroll {
    position: absolute;
    border-radius: 3px;
    background: #575957;
  }
  .vscroll {
    right: 1px;
    top: 17px;
    bottom: 16px;
    width: 6px;
  }
  .vscroll div {
    height: 29%;
    margin-top: 127px;
    border-radius: 3px;
    background: #929292;
  }
  .hscroll {
    left: 18px;
    right: 16px;
    bottom: 1px;
    height: 6px;
  }
  .hscroll div {
    width: 29%;
    height: 6px;
    margin-left: 267px;
    border-radius: 3px;
    background: #929292;
  }

  /* output */
  .output {
    flex: none;
    height: 339px;
    display: flex;
    flex-direction: column;
    border-radius: 3px;
    background: var(--panel);
  }
  .output-body {
    flex: 1;
    min-height: 0;
    display: flex;
    gap: 4px;
    padding: 6px 4px 0;
  }
  .log-side {
    flex: 1;
    min-width: 0;
    display: flex;
    flex-direction: column;
    gap: 4px;
  }
  .log {
    flex: 1;
    padding: 5px 4px;
    border-radius: 3px;
    background: var(--box);
    font: 13px/16px "DejaVu Sans Mono", monospace;
  }
  .log p {
    min-height: 16px;
  }
  .log .error {
    display: flex;
    align-items: center;
    gap: 8px;
    color: #f5786f;
  }
  .log i,
  .bottom-bar i {
    width: 8px;
    height: 8px;
    border-radius: 4px;
    background: #ff8070;
  }
  .log-side .field {
    flex: none;
    height: 28px;
  }
  .log-tools {
    width: 60px;
    display: flex;
    flex-direction: column;
    gap: 4px;
  }
  .pair {
    display: flex;
    gap: 4px;
    height: 33px;
    padding-bottom: 6px;
    border-bottom: 1px solid #48525d;
  }
  .pair + .pair {
    margin: 1px 0 2px;
  }
  .pair button {
    width: 28px;
    height: 26px;
    border-radius: 3px;
  }
  .pair .pressed {
    background: var(--bg);
    color: var(--accent);
  }
  .counter {
    height: 30px;
    justify-content: flex-start;
    padding-left: 6px;
    border-bottom: 2px solid transparent;
    border-radius: 3px;
  }
  .counter span {
    flex: 1;
    padding-left: 13px;
    text-align: left;
  }
  .counter.on {
    border-color: #70b3ee;
    background: #1e262d;
    color: #6ca8dc;
  }
  .bottom-bar {
    flex: none;
    height: 39px;
    display: flex;
    align-items: center;
    gap: 16px;
    padding: 0 10px;
  }
  .bottom-bar .active {
    gap: 4px;
    color: var(--accent);
  }
  .bottom-bar i {
    background: #84697f;
  }
  .version {
    margin-left: auto;
    display: flex;
    align-items: center;
    gap: 10px;
    color: #8f959c;
  }

  /* inspector */
  .resource-bar {
    height: 36px;
    padding: 2px 2px 0;
  }
  .resource-bar .nav {
    width: 24px;
  }
  .spacer {
    flex: 1;
  }
  .object-bar {
    padding-left: 4px;
    margin-bottom: 4px;
  }
  .object-bar .object {
    height: 30px;
    padding: 0 4px;
  }
  .object-bar button {
    width: 36px;
  }
  .object-bar select {
    margin-left: 8px;
  }
  .inspect {
    flex: 1;
    min-height: 0;
    display: flex;
    gap: 3px;
    margin: 0 4px 4px;
    padding: 4px 7px 0 4px;
    border-radius: 3px;
    background: var(--box);
  }
  .props {
    flex: 1;
    min-width: 0;
    overflow: hidden;
  }
  .inspect .track {
    margin: 2px 0 8px;
  }
  .inspect .thumb {
    height: 91%;
  }
  .category {
    height: 24px;
    display: flex;
    align-items: center;
    justify-content: center;
    gap: 7px;
    padding-bottom: 2px;
    border-radius: 3px;
    background: #40444d;
    font-size: 14px;
    font-weight: 700;
  }
  .section {
    width: 100%;
    height: 24px;
    justify-content: flex-start;
    padding-bottom: 2px;
    background: #282c35;
    font-weight: 700;
  }
  .section > :global(svg) {
    color: #8d9196;
  }
  .section.sub {
    background: #20292f;
  }
  .section small {
    margin-left: auto;
    font-size: 14px;
    font-weight: 400;
    padding-right: 2px;
    color: var(--faint);
  }
  .group {
    display: grid;
    gap: 4px;
    padding-left: 12px;
  }
  .notice {
    height: 35px;
    display: flex;
    align-items: center;
    gap: 9px;
    padding: 0 2px 0 4px;
    background: #273441;
  }
  .notice span {
    flex: 1;
  }
  .notice > :global(svg:last-child) {
    color: #8d9196;
  }
  .prop {
    height: 30px;
    display: flex;
    align-items: center;
    padding-left: 8px;
    color: var(--muted);
  }
  .prop > label:first-child {
    flex: 1;
  }
  .prop.short {
    height: 28px;
  }
  .prop.off {
    color: var(--faint);
  }
  .value {
    width: 192px;
    height: 100%;
    display: flex;
    align-items: center;
    gap: 5px;
    padding: 0 2px 0 6px;
    background: #1d2226;
    color: var(--text);
  }
  .off .value {
    color: var(--faint);
  }
  .revert {
    width: 32px;
  }
  .color-row {
    height: 28px;
  }
  .color-row input {
    width: 186px;
    height: 18px;
    margin-right: 6px;
  }
  .color-row input::-webkit-color-swatch-wrapper {
    padding: 0;
  }
  .color-row input::-webkit-color-swatch {
    border: 0;
  }
  .check {
    gap: 10px;
    padding-left: 5px;
  }
  .check input {
    appearance: none;
    width: 14px;
    height: 14px;
    border-radius: 2px;
    background: #45484a;
  }
  .check input:checked {
    position: relative;
    background: #808285;
  }
  .check input:checked::after {
    content: "";
    position: absolute;
    left: 5px;
    top: 1px;
    width: 4px;
    height: 9px;
    border: solid #d0d2d4;
    border-width: 0 2px 2px 0;
    transform: rotate(45deg);
  }
  .prop.vector {
    height: auto;
    align-items: flex-start;
  }
  .vector > label {
    padding-top: 3px;
  }
  .axes {
    display: grid;
    gap: 4px;
  }
  .axes .value {
    height: 29px;
    padding: 0 0 2px;
  }
  .axes label {
    width: 19px;
    height: 27px;
    line-height: 26px;
    text-align: center;
    background: #171b22;
  }
  .axes .x {
    color: #8f6257;
  }
  .axes .y {
    color: #529a62;
  }
  .axes input {
    width: 9px;
  }
  .axes span {
    color: #666b6f;
  }
</style>
